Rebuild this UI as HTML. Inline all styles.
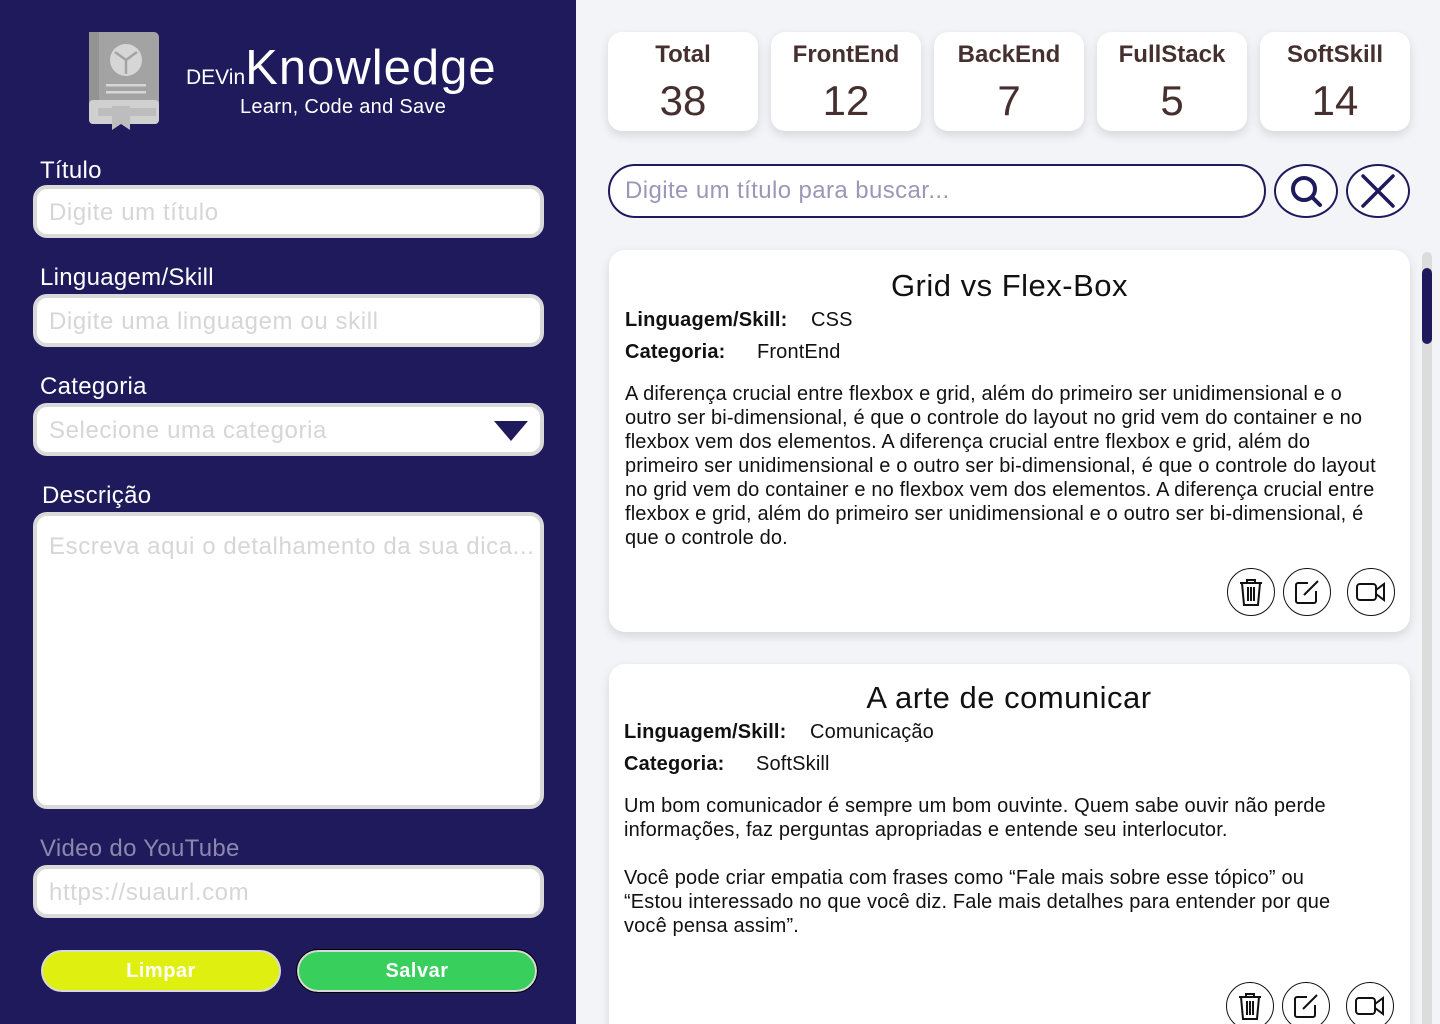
<!DOCTYPE html>
<html><head><meta charset="utf-8"><style>
*{box-sizing:border-box;margin:0;padding:0}
html{width:1440px;height:1024px;overflow:hidden}
body{width:1440px;height:1024px;overflow:hidden;background:#f3f4f7;font-family:"Liberation Sans","DejaVu Sans",sans-serif;position:relative}
.side{position:absolute;left:0;top:0;width:576px;height:1024px;background:#1f1a5c;color:#fff}
.lbl{position:absolute;left:40px;font-size:24px;color:#fff;letter-spacing:.3px}
.inp{position:absolute;left:33px;width:511px;background:#fff;border:4px solid #d9d9d9;border-radius:14px;color:#d6d6d6;font-size:24px;padding-left:12px;line-height:48px;letter-spacing:.6px}
.btn{position:absolute;top:950px;height:42px;border:2px solid #d9d9d9;border-radius:22px;color:#fff;font-weight:bold;font-size:20px;text-align:center;line-height:38px;letter-spacing:.5px}
.stat{position:absolute;top:32px;width:150px;height:99px;background:#fff;border-radius:14px;box-shadow:0 4px 10px rgba(0,0,0,.12);text-align:center;color:#45302f}
.stat b{display:block;font-size:24px;margin-top:9px}
.stat span{display:block;font-size:42px;line-height:48px;margin-top:8px}
.card{position:absolute;left:609px;width:801px;background:#fff;border-radius:16px;box-shadow:0 4px 10px rgba(0,0,0,.12);padding:0 16px;color:#111;font-size:20px;letter-spacing:.15px}
.card h2{text-align:center;font-weight:normal;font-size:31px;margin-top:18px;line-height:36px;letter-spacing:.5px}
.card .row{line-height:32px}
.card .row b{display:inline-block}
.card p{line-height:24px;padding-right:14px}
.ic{position:absolute;width:48px;height:48px;border:1.5px solid #111;border-radius:50%;display:flex;align-items:center;justify-content:center}
.circ{position:absolute;top:164px;width:64px;height:54px;border:2px solid #1f1a5c;border-radius:50%;display:flex;align-items:center;justify-content:center;background:#fff}
</style></head><body>
<div class="side">
 <svg style="position:absolute;left:88px;top:32px" width="72" height="98" viewBox="0 0 72 98">
  <rect x="1" y="0" width="70" height="80" rx="5" fill="#a3a3a3"/>
  <rect x="1" y="0" width="10" height="80" fill="#939393"/>
  <rect x="1" y="68" width="70" height="24" rx="4" fill="#d0d0d0"/>
  <rect x="10" y="76" width="58" height="8" fill="#bdbdbd"/>
  <circle cx="38" cy="28" r="16" fill="#d6d6d6"/>
  <path d="M38 28 L38 42 M38 28 L27 20 M38 28 L49 20" stroke="#a3a3a3" stroke-width="2.5"/>
  <rect x="18" y="52" width="40" height="2.5" fill="#d6d6d6"/><rect x="18" y="59" width="40" height="2.5" fill="#d6d6d6"/>
  <path d="M24 74 H42 V98 L33 92 L24 98 Z" fill="#bdbdbd"/>
 </svg>
 <div style="position:absolute;left:186px;top:40px;white-space:nowrap"><span style="font-size:21px">DEVin</span><span style="font-size:49px;letter-spacing:1px">Knowledge</span></div>
 <div style="position:absolute;left:240px;top:96px;font-size:20px;letter-spacing:.3px">Learn, Code and Save</div>
 <div class="lbl" style="top:157px">Título</div>
 <div class="inp" style="top:185px;height:53px">Digite um título</div>
 <div class="lbl" style="top:264px">Linguagem/Skill</div>
 <div class="inp" style="top:294px;height:53px">Digite uma linguagem ou skill</div>
 <div class="lbl" style="top:373px">Categoria</div>
 <div class="inp" style="top:403px;height:53px">Selecione uma categoria
  <svg style="position:absolute;right:12px;top:14px" width="34" height="20"><path d="M0 0H34L17 20Z" fill="#1f1a5c"/></svg></div>
 <div class="lbl" style="top:482px;left:42px">Descrição</div>
 <div class="inp" style="top:512px;height:297px;line-height:62px">Escreva aqui o detalhamento da sua dica...</div>
 <div class="lbl" style="top:835px;color:#8b87ad">Video do YouTube</div>
 <div class="inp" style="top:865px;height:53px">https://suaurl.com</div>
 <div class="btn" style="left:41px;width:240px;background:#dfef0f">Limpar</div>
 <div class="btn" style="left:297px;width:240px;background:#39cf5c;outline:1px solid #000">Salvar</div>
</div>
<div class="stat" style="left:608px"><b>Total</b><span>38</span></div>
<div class="stat" style="left:771px"><b>FrontEnd</b><span>12</span></div>
<div class="stat" style="left:934px"><b>BackEnd</b><span>7</span></div>
<div class="stat" style="left:1097px"><b>FullStack</b><span>5</span></div>
<div class="stat" style="left:1260px"><b>SoftSkill</b><span>14</span></div>
<div style="position:absolute;left:608px;top:164px;width:658px;height:54px;border:2px solid #1f1a5c;border-radius:27px;background:#fff;font-size:24px;color:#9a97b8;padding-left:15px;line-height:50px;letter-spacing:.4px">Digite um título para buscar...</div>
<div class="circ" style="left:1274px"><svg width="36" height="36" viewBox="0 0 36 36"><circle cx="16" cy="16" r="11" fill="none" stroke="#1f1a5c" stroke-width="4"/><path d="M24 24L32 32" stroke="#1f1a5c" stroke-width="4" stroke-linecap="round"/></svg></div>
<div class="circ" style="left:1346px"><svg width="36" height="36"><path d="M3 3L33 33M33 3L3 33" stroke="#1f1a5c" stroke-width="3.5" stroke-linecap="round"/></svg></div>
<div style="position:absolute;left:1422px;top:252px;width:10px;height:780px;background:#dcdcdc;border-radius:5px"></div>
<div style="position:absolute;left:1422px;top:268px;width:10px;height:76px;background:#1f1a5c;border-radius:5px"></div>

<div class="card" style="top:250px;height:382px">
 <h2>Grid vs Flex-Box</h2>
 <div class="row"><b style="width:186px">Linguagem/Skill:</b>CSS</div>
 <div class="row"><b style="width:132px">Categoria:</b>FrontEnd</div>
 <p style="margin-top:14px">A diferença crucial entre flexbox e grid, além do primeiro ser unidimensional e o outro ser bi-dimensional, é que o controle do layout no grid vem do container e no flexbox vem dos elementos. A diferença crucial entre flexbox e grid, além do primeiro ser unidimensional e o outro ser bi-dimensional, é que o controle do layout no grid vem do container e no flexbox vem dos elementos. A diferença crucial entre flexbox e grid, além do primeiro ser unidimensional e o outro ser bi-dimensional, é que o controle do.</p>
 <div class="ic" style="left:618px;top:318px"><svg width="28" height="30" viewBox="0 0 28 30"><path d="M3 6H25M10 6V3H18V6M5 6L7 28H21L23 6M11 10V24M14 10V24M17 10V24" fill="none" stroke="#111" stroke-width="2"/></svg></div>
 <div class="ic" style="left:674px;top:318px"><svg width="30" height="30" viewBox="0 0 30 30"><path d="M16 6H6A2 2 0 0 0 4 8V24A2 2 0 0 0 6 26H22A2 2 0 0 0 24 24V14M12 18L26 4" fill="none" stroke="#111" stroke-width="2"/></svg></div>
 <div class="ic" style="left:738px;top:318px"><svg width="32" height="24" viewBox="0 0 32 24"><rect x="2" y="4" width="19" height="16" rx="3" fill="none" stroke="#111" stroke-width="2"/><path d="M21 10L29 4V20L21 14" fill="none" stroke="#111" stroke-width="2"/></svg></div>
</div>

<div class="card" style="top:664px;height:400px;padding-left:15px">
 <h2 style="margin-top:16px">A arte de comunicar</h2>
 <div class="row"><b style="width:186px">Linguagem/Skill:</b>Comunicação</div>
 <div class="row"><b style="width:132px">Categoria:</b>SoftSkill</div>
 <p style="margin-top:14px;padding-right:30px">Um bom comunicador é sempre um bom ouvinte. Quem sabe ouvir não perde informações, faz perguntas apropriadas e entende seu interlocutor.<br><br>Você pode criar empatia com frases como “Fale mais sobre esse tópico” ou “Estou interessado no que você diz. Fale mais detalhes para entender por que você pensa assim”.</p>
 <div class="ic" style="left:617px;top:318px"><svg width="28" height="30" viewBox="0 0 28 30"><path d="M3 6H25M10 6V3H18V6M5 6L7 28H21L23 6M11 10V24M14 10V24M17 10V24" fill="none" stroke="#111" stroke-width="2"/></svg></div>
 <div class="ic" style="left:673px;top:318px"><svg width="30" height="30" viewBox="0 0 30 30"><path d="M16 6H6A2 2 0 0 0 4 8V24A2 2 0 0 0 6 26H22A2 2 0 0 0 24 24V14M12 18L26 4" fill="none" stroke="#111" stroke-width="2"/></svg></div>
 <div class="ic" style="left:737px;top:318px"><svg width="32" height="24" viewBox="0 0 32 24"><rect x="2" y="4" width="19" height="16" rx="3" fill="none" stroke="#111" stroke-width="2"/><path d="M21 10L29 4V20L21 14" fill="none" stroke="#111" stroke-width="2"/></svg></div>
</div>
</body></html>
